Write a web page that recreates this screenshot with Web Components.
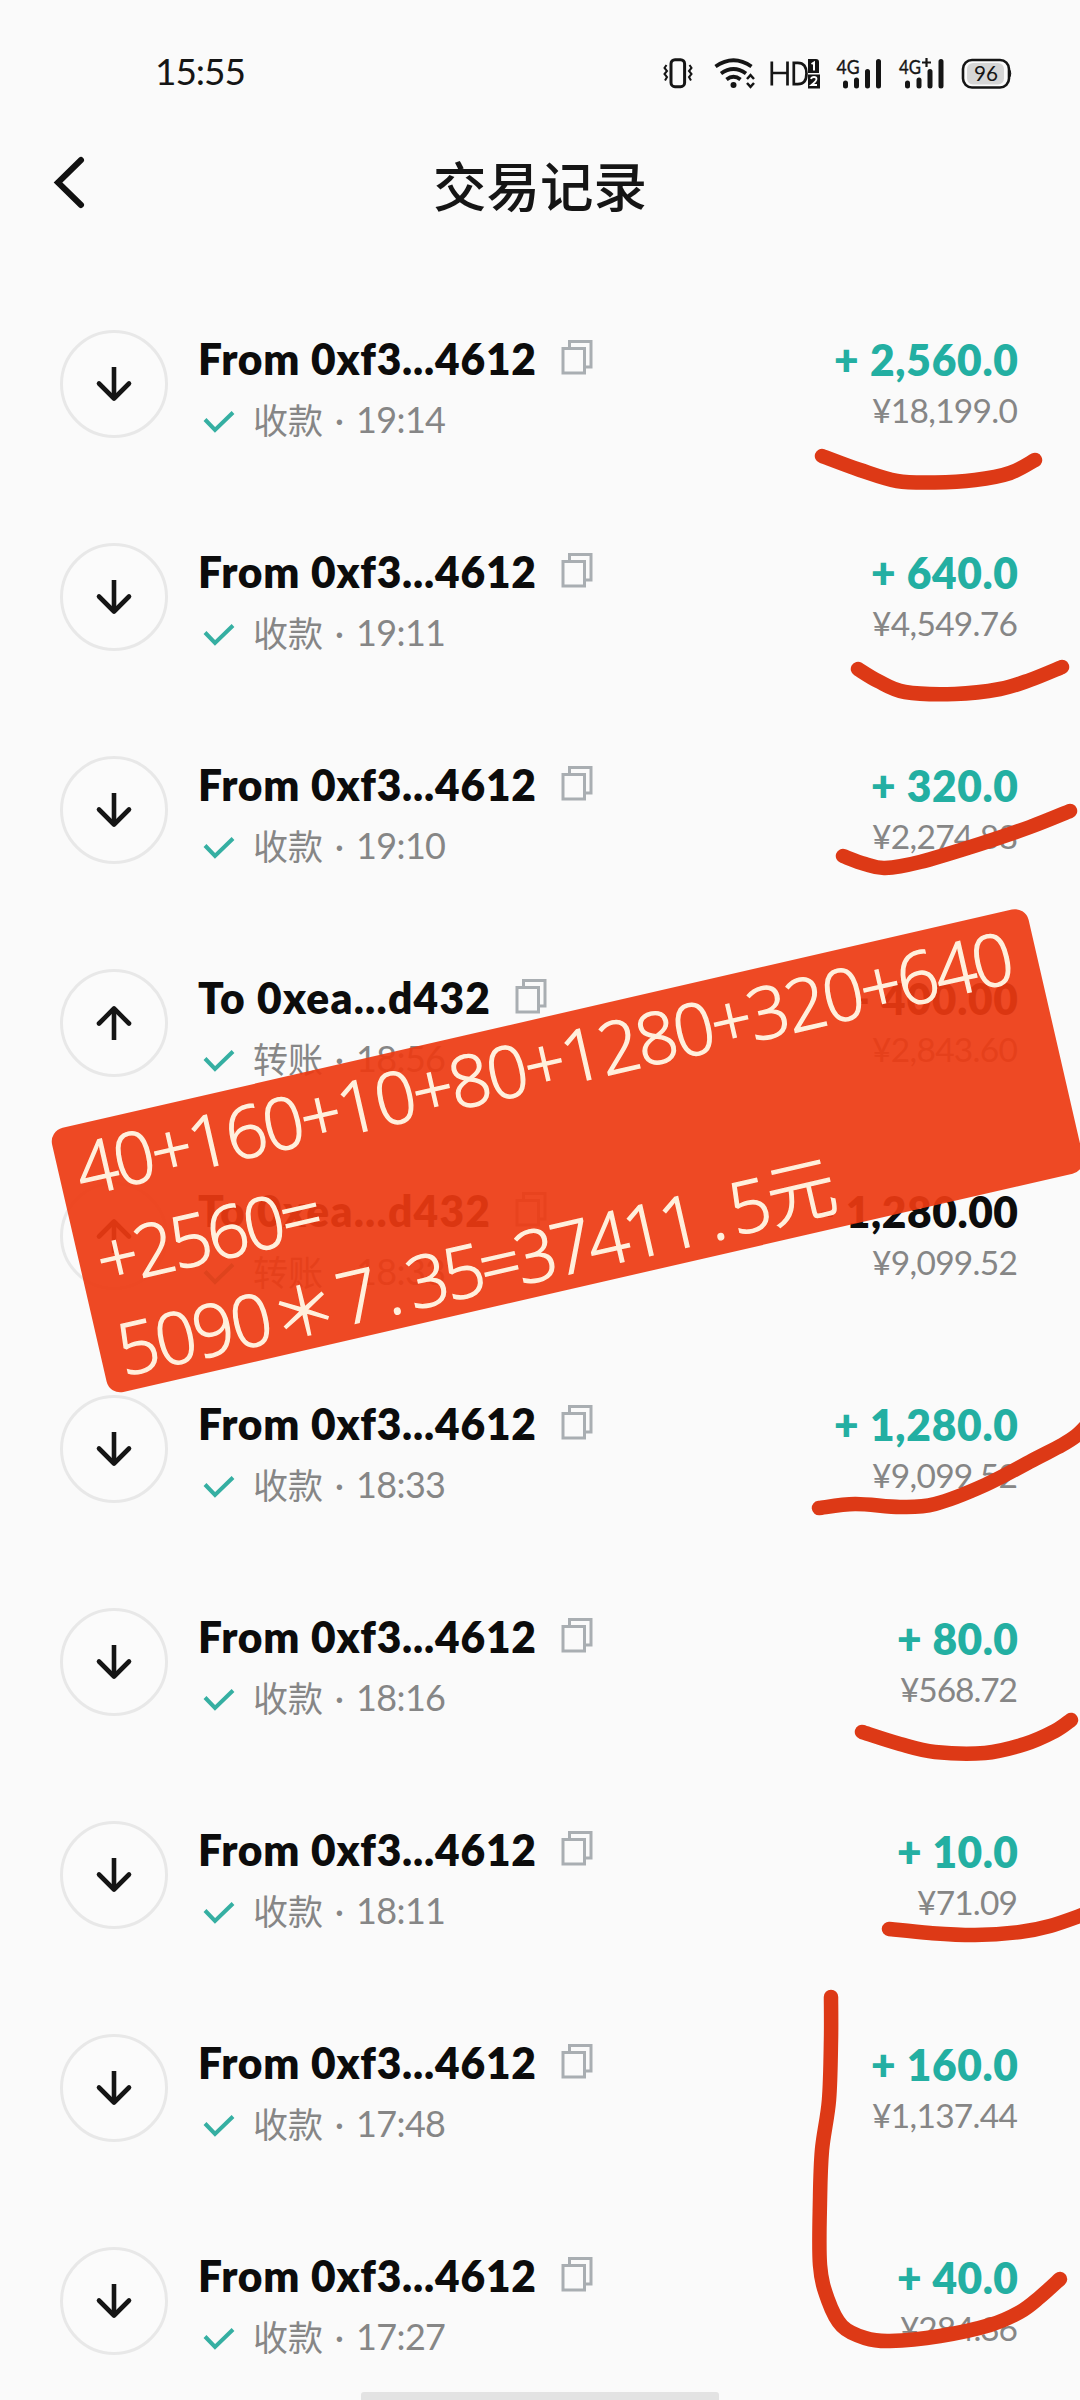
<!DOCTYPE html>
<html lang="zh-CN">
<head>
<meta charset="utf-8">
<title>交易记录</title>
<style>
html,body{margin:0;padding:0;background:#fafafa}
body{width:1080px;height:2400px;overflow:hidden;font-family:Lato,"Noto Sans CJK SC",sans-serif}
</style>
</head>
<body>
<wallet-history></wallet-history>
<script>
const define = (name, html, after) => customElements.define(name, class extends HTMLElement {
  connectedCallback() {
    if (this.shadowRoot) return;
    this.attachShadow({mode: 'open'}).innerHTML = typeof html === 'function' ? html(this) : html;
    if (after) after(this);
  }
});

/* Spreads its text over an exact width by letter spacing. */
define('fit-text', '<style>:host{display:inline-block;white-space:pre}</style><slot></slot>', el => {
  const n = [...el.textContent].length;
  const natural = parseFloat(getComputedStyle(el).width);
  const gap = (Number(el.getAttribute('w')) - natural) / (n - 1);
  el.style.letterSpacing = gap + 'px';
  el.style.marginRight = -gap + 'px';
});

define('status-bar', `
<style>
:host{display:flex;height:102px;align-items:flex-end;padding:0 69px 0 155px;color:#151515;box-sizing:border-box}
.time{flex:1;font-size:37px;line-height:44px;margin-bottom:9.500px}
svg{display:block;margin-bottom:6px;overflow:visible}
text{font-family:Lato,sans-serif;fill:#151515}
</style>
<span class="time"><fit-text w="91">15:55</fit-text></span>
<svg width="350" height="44" viewBox="0 -6 350 44" fill="none" stroke="#151515">
  <rect x="10" y="1.7" width="13.6" height="27" rx="4" stroke-width="3"/>
  <path d="M5.5 7l-2 3 2.5 3-2.500 3 2.500 3-2 3.500M28.500 7l2 3-2.500 3 2.500 3-2.500 3 2 3.500" stroke-width="2"/>
  <g stroke-width="3.8">
    <path d="M54.500 8.500q18-12.500 36 0"/><path d="M60 15.500q12.500-9 25 0"/><path d="M65.500 21.500q7-5.500 14 0"/>
  </g>
  <circle cx="72.500" cy="27" r="3" fill="#151515" stroke="none"/>
  <path d="M86 21l3.500-3.800 3.500 3.800M86 25l3.500 3.800 3.500-3.800" stroke-width="2.500"/>
  <path d="M110.800 3.500v24M126.500 3.500v24M110.800 15h15.700" stroke-width="2.700"/>
  <path d="M132.800 4.800v21.400h4c6 0 8.700-4 8.700-10.700s-2.700-10.700-8.700-10.700z" stroke-width="2.700"/>
  <path d="M147 1h8q3 0 3 3v11h-11zM147 16.500h12v14h-12z" fill="#151515" stroke="none"/>
  <path d="M150.500 6l2.500-1.500v8" stroke="#fff" stroke-width="2"/>
  <path d="M150 21q.5-2 3-2t2.500 2q0 2-5 6h5.500" stroke="#fff" stroke-width="1.800"/>
  <g stroke-width="5" stroke-linecap="round">
    <path d="M184.500 25v3M195.500 22v6M206.500 13.500v14.500M217.500 3.500v24.500"/>
    <path d="M246.500 25v3M258 22v6M269 13.500v14.500M280 3.500v24.500"/>
  </g>
  <text x="175.500" y="15.500" font-size="20" textLength="23" lengthAdjust="spacingAndGlyphs" stroke-width=".4">4G</text>
  <text x="238" y="15.500" font-size="20" textLength="22" lengthAdjust="spacingAndGlyphs" stroke-width=".4">4G</text>
  <path d="M265.500 0v9M261 4.500h9" stroke-width="2.200"/>
  <rect x="302" y="2" width="46" height="27.500" rx="9" stroke-width="2.600" fill="#fafafa"/>
  <rect x="306" y="5" width="37" height="21.500" rx="6" fill="#d6d6d6" stroke="none"/>
  <path d="M348 10.500q3.500 5 0 10z" fill="#151515"/>
  <text x="313" y="23.300" font-size="22" textLength="24" lengthAdjust="spacingAndGlyphs" stroke="none">96</text>
</svg>`);

define('page-header', `
<style>
:host{display:grid;grid-template-columns:120px 1fr 120px;height:175px;color:#111}
svg{display:block;margin:53px 0 0 52px}
h1{margin:42px 0 0;font:500 53.500px/80px "Noto Sans CJK SC",sans-serif;text-align:center;color:#151515}
</style>
<svg width="36" height="56" viewBox="0 0 36 56" fill="none" stroke="#111" stroke-width="6" stroke-linecap="round"><path d="M29 5L6 27.500 29 50"/></svg>
<h1><slot></slot></h1>`);

define('arrow-badge', el => `
<style>
:host{display:grid;place-items:center;width:108px;height:108px;box-sizing:border-box;border:3px solid #e8e8e8;border-radius:50%;background:#fbfbfb}
svg{display:block}
</style>
<svg width="38" height="40" viewBox="0 0 38 40" fill="none" stroke="#151515" stroke-width="4.600" stroke-linecap="round"${el.getAttribute('dir') === 'up' ? ' style="transform:rotate(180deg)"' : ''}><path d="M19 3v30" stroke-linecap="butt"/><path d="M4 19.500l15 15 15-15" stroke-linejoin="round"/></svg>`);

define('copy-icon', `
<style>:host{display:block}svg{display:block}</style>
<svg width="32" height="36" viewBox="0 0 32 36" fill="none" stroke="#a9aeb2" stroke-width="3"><path d="M8.500 9V2.500h21.500v25.500h-6"/><rect x="2" y="9.500" width="21.500" height="24.500"/></svg>`);

define('tx-row', el => {
  const a = k => el.getAttribute(k);
  const out = a('dir') === 'up';
  return `
<style>
:host{display:flex;height:213.1px;box-sizing:border-box;padding:52.500px 62px 0 60px}
.body{flex:1;padding:5px 0 0 30px}
.name{display:flex;align-items:flex-start;height:48px;font-size:42.500px;line-height:48px;font-weight:800;color:#0c0c0c}
copy-icon{margin:4px 0 0 25px}
.meta{display:flex;height:56px;line-height:56px;margin-top:8px;color:#868686;font-size:36px}
.meta svg{display:block;margin:19px 18px 0 5px}
.kind{font-size:35px;font-family:"Noto Sans CJK SC",sans-serif}
.dot{width:33px;text-align:center}
.sum{display:flex;flex-direction:column;align-items:flex-end}
.amt{height:48px;margin-top:6.500px;font-size:42.500px;line-height:48px;font-weight:800;color:${out ? '#0c0c0c' : '#23afa2'}}
.cny{height:40px;margin-top:6px;font-size:33.500px;line-height:40px;color:#868686}
</style>
<arrow-badge dir="${a('dir')}"></arrow-badge>
<div class="body">
  <div class="name"><fit-text w="${out ? 292 : 338}">${a('name')}</fit-text><copy-icon></copy-icon></div>
  <div class="meta"><svg width="32" height="24" viewBox="0 0 32 24" fill="none" stroke="#35afa2" stroke-width="4"><path d="M2 9.500l10 10.500L30 2.500"/></svg><span class="kind">${out ? '转账' : '收款'}</span><span class="dot">·</span><fit-text w="90">${a('time')}</fit-text></div>
</div>
<div class="sum">
  <div class="amt"><fit-text w="${a('aw')}">${a('amt')}</fit-text></div>
  <div class="cny"><fit-text w="${a('cw')}">${a('cny')}</fit-text></div>
</div>`;
});

const F = 'From 0xf3...4612', T = 'To 0xea...d432';
const rows = [
  ['down', F, '19:14', '+ 2,560.0', 184, '¥18,199.0', 146],
  ['down', F, '19:11', '+ 640.0', 147, '¥4,549.76', 146],
  ['down', F, '19:10', '+ 320.0', 147, '¥2,274.88', 146],
  ['up', T, '18:56', '- 400.00', 164, '¥2,843.60', 146],
  ['up', T, '18:33', '- 1,280.00', 199, '¥9,099.52', 146],
  ['down', F, '18:33', '+ 1,280.0', 184, '¥9,099.52', 146],
  ['down', F, '18:16', '+ 80.0', 121, '¥568.72', 118],
  ['down', F, '18:11', '+ 10.0', 121, '¥71.09', 101],
  ['down', F, '17:48', '+ 160.0', 147, '¥1,137.44', 146],
  ['down', F, '17:27', '+ 40.0', 121, '¥284.36', 118]
];
define('tx-list', '<style>:host{display:block}</style>' + rows.map(r =>
  `<tx-row dir="${r[0]}" name="${r[1]}" time="${r[2]}" amt="${r[3]}" aw="${r[4]}" cny="${r[5]}" cw="${r[6]}"></tx-row>`).join(''));

/* Hand-drawn marker strokes, each a list of points joined by a smooth curve. */
const strokes = [
  [[822,456],[860,470],[897,481],[935,482.5],[975,480],[1010,473],[1035,460]],
  [[858,669],[878,681],[905,692],[955,694],[1000,689],[1030,680],[1062,667]],
  [[843,856],[865,864],[885,868],[920,862],[980,844],[1030,827],[1070,811]],
  [[819,1508],[855,1504],[900,1507],[935,1504],[985,1485],[1035,1459],[1062,1445],[1076,1436],[1088,1424]],
  [[862,1732],[900,1744],[935,1752],[985,1753],[1025,1744],[1055,1731],[1071,1720]],
  [[889,1929],[930,1933],[975,1935],[1020,1932],[1050,1926],[1085,1914]],
  [[831,1997],[831,2040],[829,2100],[822,2150],[820,2200],[820,2265],[828,2300],[842,2326],[865,2338],[890,2341],[940,2336],[990,2325],[1020,2312],[1040,2297],[1060,2279]]
];
const smooth = p => {
  let d = `M${p[0]}`;
  for (let i = 0; i < p.length - 1; i++) {
    const a = p[i - 1] || p[i], b = p[i], c = p[i + 1], e = p[i + 2] || c;
    d += `C${b[0] + (c[0] - a[0]) / 6},${b[1] + (c[1] - a[1]) / 6} ${c[0] - (e[0] - b[0]) / 6},${c[1] - (e[1] - b[1]) / 6} ${c[0]},${c[1]}`;
  }
  return d;
};
define('marker-layer', `
<style>:host{position:absolute;inset:0;display:block}svg{display:block}</style>
<svg width="1080" height="2400" viewBox="0 0 1080 2400" fill="none" stroke="#dd3916" stroke-width="14.500" stroke-linecap="round" stroke-linejoin="round">${strokes.map(p => `<path d="${smooth(p)}"/>`).join('')}</svg>`);

define('sum-note', `
<style>
:host{position:absolute;left:49px;top:1131px;width:1002px;height:271px;box-sizing:border-box;padding:0 0 0 18px;
  transform-origin:0 0;transform:rotate(-12.95deg);background:rgba(237,58,18,.925);border-radius:14px;
  color:#fff0dd;font:300 72px/92.500px "Open Sans","Noto Sans CJK SC",sans-serif}
.line{display:flex;height:92.500px;margin-top:-3px;margin-bottom:3px;-webkit-text-stroke:1.300px #fff0dd}
.star{width:66px;margin-right:4px;text-align:center;font-size:66px;font-family:"Noto Sans CJK SC";font-weight:300}
.cell{display:flex;justify-content:center;width:38px}
.dot{display:flex;justify-content:center;width:32px}
.yuan{font:300 69px/82px "Noto Sans CJK SC",sans-serif}
</style>
<div class="line"><fit-text w="960">40+160+10+80+1280+320+640</fit-text></div>
<div class="line"><fit-text w="229">+2560=</fit-text></div>
<div class="line"><fit-text w="157">5090</fit-text><span class="star">＊</span><span class="cell">7</span><span class="dot">.</span><fit-text w="300">35=37411</fit-text><span class="dot">.</span><span class="cell">5</span><span class="yuan">元</span></div>`);

define('wallet-history', `
<style>
:host{position:relative;display:block;width:1080px;height:2400px;overflow:hidden;background:#fafafa}
.bar{position:absolute;left:361px;bottom:0;width:358px;height:8px;background:#e3e3e3;border-radius:3px 3px 0 0}
</style>
<status-bar></status-bar>
<page-header>交易记录</page-header>
<tx-list></tx-list>
<marker-layer></marker-layer>
<sum-note></sum-note>
<div class="bar"></div>`);
</script>
</body>
</html>
